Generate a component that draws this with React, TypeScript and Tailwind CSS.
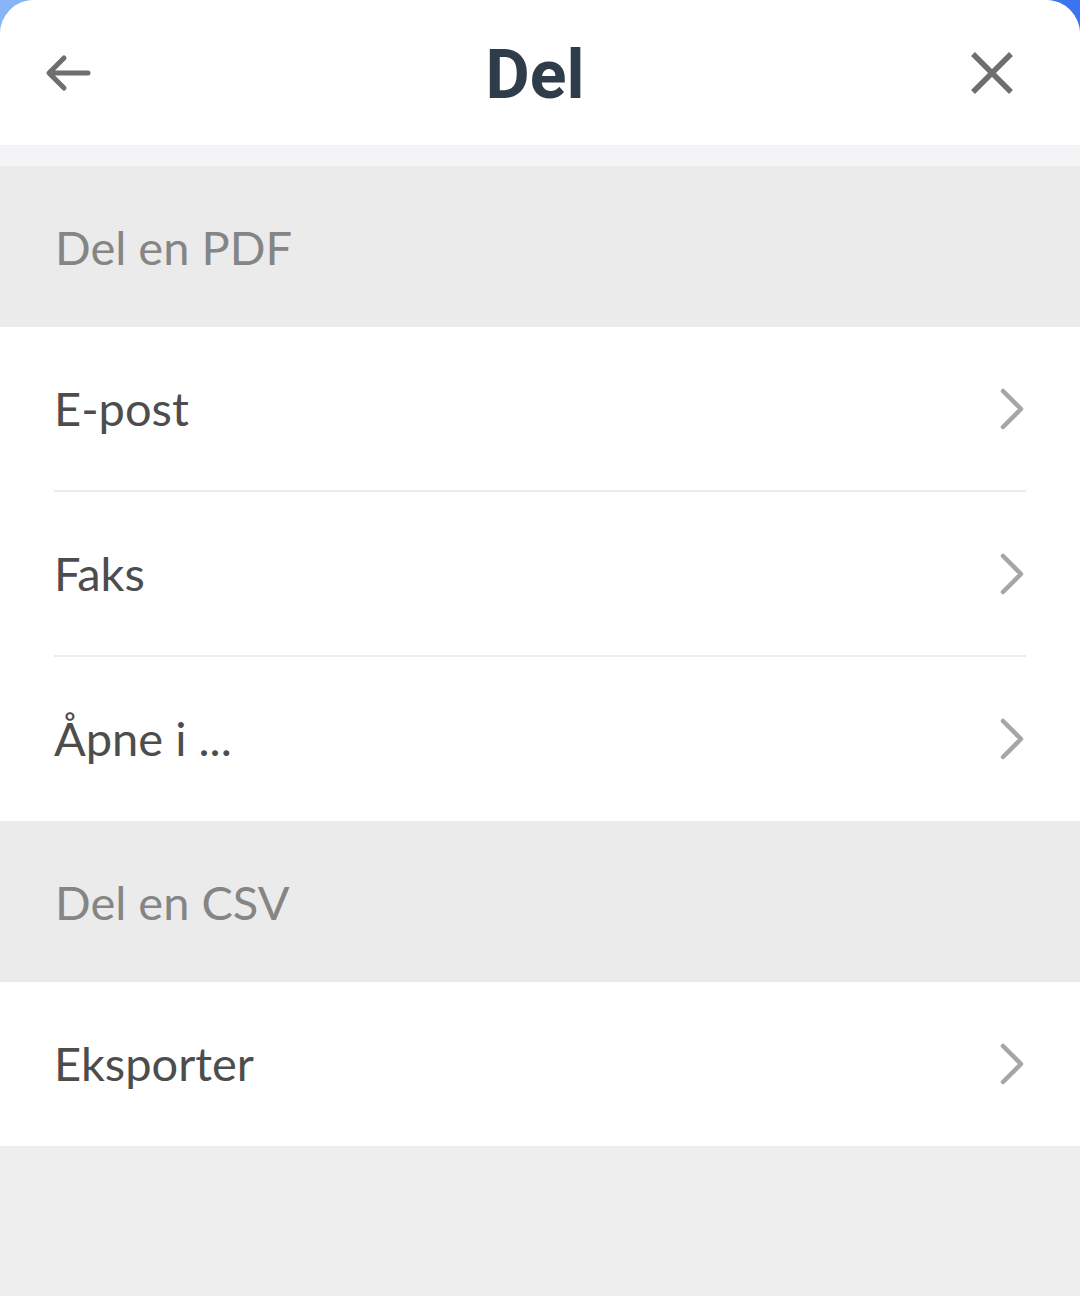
import React from 'react';

const Chevron = () => (
  <svg width="28" height="44" viewBox="0 0 28 44" fill="none">
    <path d="M5 4 L23 22 L5 40" stroke="#a6a6a6" strokeWidth="4.5" strokeLinecap="round" strokeLinejoin="round" />
  </svg>
);

const SectionHeader = ({ title }: { title: string }) => (
  <div className="h-[161px] bg-[#ebebeb] flex items-center pl-[55px]">
    <span className="text-[47px] text-[#858585] font-['Lato',sans-serif] pt-[2px]">{title}</span>
  </div>
);

const Row = ({ label, divider }: { label: string; divider?: boolean }) => (
  <div className="bg-white">
    <div className="h-[163px] flex items-center justify-between pl-[54px] pr-[54px]">
      <span className="text-[47px] text-[#4d4d4d] font-['Lato',sans-serif]">{label}</span>
      <Chevron />
    </div>
    <div className={divider ? 'mx-[54px] h-[2px] bg-[#ececec]' : 'h-[1px]'} />
  </div>
);

export default function App() {
  return (
    <div className="h-[1296px] w-[1080px] bg-gradient-to-r from-[#8ab4f8] to-[#3b74ee]">
      <div className="h-full rounded-t-[34px] overflow-hidden bg-[#eeeeee] flex flex-col">
        {/* Header */}
        <div className="h-[145px] bg-white flex items-center">
          <div className="w-[200px] pl-[44px] flex items-center">
            <svg width="48" height="40" viewBox="0 0 48 40" fill="none">
              <path d="M44 20 H6 M20 5 L5 20 L20 35" stroke="#6e6e6e" strokeWidth="5" strokeLinecap="round" strokeLinejoin="round" />
            </svg>
          </div>
          <h1 className="flex-1 text-center text-[68px] font-bold text-[#2f3d4a] font-['Roboto',sans-serif] leading-none pr-[10px] pt-[4px]">Del</h1>
          <div className="w-[200px] pr-[66px] flex items-center justify-end">
            <svg width="44" height="44" viewBox="0 0 44 44" fill="none">
              <path d="M3 3 L41 41 M41 3 L3 41" stroke="#6e6e6e" strokeWidth="5.5" strokeLinecap="butt" />
            </svg>
          </div>
        </div>
        <div className="h-[21px] bg-[#f4f4f7]" />

        <SectionHeader title="Del en PDF" />
        <Row label="E-post" divider />
        <Row label="Faks" divider />
        <Row label="Åpne i ..." />

        <SectionHeader title="Del en CSV" />
        <Row label="Eksporter" />
      </div>
    </div>
  );
}
